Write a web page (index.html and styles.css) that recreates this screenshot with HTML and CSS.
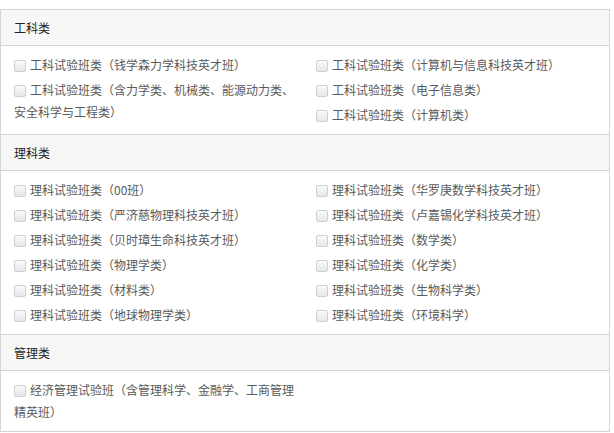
FILE: index.html
```html
<!DOCTYPE html>
<html lang="zh-CN">
<head>
  <meta charset="UTF-8">
  <title>试验班选择</title>
  <link rel="stylesheet" href="styles.css">
</head>
<body>

  <div class="panel">
    <!-- 工科类 -->
    <div class="panel-heading">工科类</div>
    <div class="panel-body">
      <div class="col">
        <label class="item"><input type="checkbox">工科试验班类（钱学森力学科技英才班）</label>
        <label class="item"><input type="checkbox">工科试验班类（含力学类、机械类、能源动力类、安全科学与工程类）</label>
      </div>
      <div class="col">
        <label class="item"><input type="checkbox">工科试验班类（计算机与信息科技英才班）</label>
        <label class="item"><input type="checkbox">工科试验班类（电子信息类）</label>
        <label class="item"><input type="checkbox">工科试验班类（计算机类）</label>
      </div>
    </div>

    <!-- 理科类 -->
    <div class="panel-heading">理科类</div>
    <div class="panel-body">
      <div class="col">
        <label class="item"><input type="checkbox">理科试验班类（00班）</label>
        <label class="item"><input type="checkbox">理科试验班类（严济慈物理科技英才班）</label>
        <label class="item"><input type="checkbox">理科试验班类（贝时璋生命科技英才班）</label>
        <label class="item"><input type="checkbox">理科试验班类（物理学类）</label>
        <label class="item"><input type="checkbox">理科试验班类（材料类）</label>
        <label class="item"><input type="checkbox">理科试验班类（地球物理学类）</label>
      </div>
      <div class="col">
        <label class="item"><input type="checkbox">理科试验班类（华罗庚数学科技英才班）</label>
        <label class="item"><input type="checkbox">理科试验班类（卢嘉锡化学科技英才班）</label>
        <label class="item"><input type="checkbox">理科试验班类（数学类）</label>
        <label class="item"><input type="checkbox">理科试验班类（化学类）</label>
        <label class="item"><input type="checkbox">理科试验班类（生物科学类）</label>
        <label class="item"><input type="checkbox">理科试验班类（环境科学）</label>
      </div>
    </div>

    <!-- 管理类 -->
    <div class="panel-heading">管理类</div>
    <div class="panel-body">
      <div class="col">
        <label class="item"><input type="checkbox">经济管理试验班（含管理科学、金融学、工商管理精英班）</label>
      </div>
      <div class="col"></div>
    </div>
  </div>

</body>
</html>
```

FILE: styles.css
```css
/* Global Styles */
body {
  margin: 9px 0 0 0;
  font-family: "Noto Sans CJK SC", "Noto Sans", sans-serif;
  font-size: 12px;
  color: #5a5a5a;
  background: #fff;
}

.panel {
  width: 608px;
  border: 1px solid #d4d4d4;
}

.panel-heading {
  background: #f7f7f7;
  color: #222;
  line-height: 15px;
  padding: 10px 13px;
  border-bottom: 1px solid #d4d4d4;
}

.panel-body + .panel-heading {
  border-top: 1px solid #d4d4d4;
}

.panel-body {
  display: grid;
  grid-template-columns: 290px 1fr;
  column-gap: 12px;
  padding: 8px 13px 5px;
}

.col {
  display: flex;
  flex-direction: column;
}

.item {
  display: block;
  line-height: 22px;
  padding-bottom: 3px;
  cursor: pointer;
}

/* Checkbox */
.item input {
  appearance: none;
  -webkit-appearance: none;
  width: 12px;
  height: 12px;
  margin: 0 4px 0 0;
  vertical-align: -2px;
  border: 1px solid #cfcfcf;
  border-radius: 2px;
  background: linear-gradient(#fafafa, #e6e6e6);
  box-sizing: border-box;
}
```
